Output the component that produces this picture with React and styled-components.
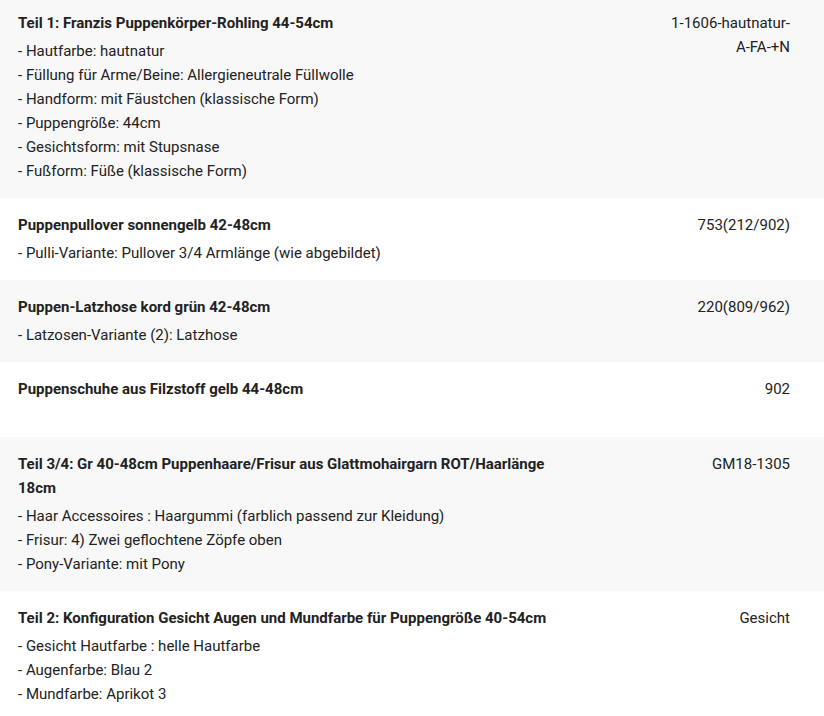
import styled, { createGlobalStyle } from "styled-components";

const Global = createGlobalStyle`
body{
margin:0;
background:#fff;
font-family:Roboto,"Noto Sans",sans-serif;
color:#222;
}
`;

const Table = styled.div`
display:flex;
flex-direction:column;
`;

const Row = styled.div`
display:grid;
grid-template-columns:1fr 125px;
column-gap:107px;
padding:15px 34px 15px 18px;
background:${p => (p.$odd ? "#f8f8f8" : "#fff")};
&:first-child{
padding-top:11px;
}
`;

const Info = styled.div`
display:flex;
flex-direction:column;
gap:4px;
min-height:${p => (p.$empty ? "45px" : "auto")};
`;

const Title = styled.div`
font-size:15px;
font-weight:700;
line-height:24px;
`;

const Options = styled.ul`
list-style:none;
margin:0;
padding:0;
font-size:15px;
line-height:24px;
`;

const Sku = styled.div`
font-size:15px;
line-height:24px;
text-align:right;
`;

const items = [
  {
    title: "Teil 1: Franzis Puppenkörper-Rohling 44-54cm",
    sku: "1-1606-hautnatur-A-FA-+N",
    opts: [
      "Hautfarbe: hautnatur",
      "Füllung für Arme/Beine: Allergieneutrale Füllwolle",
      "Handform: mit Fäustchen (klassische Form)",
      "Puppengröße: 44cm",
      "Gesichtsform: mit Stupsnase",
      "Fußform: Füße (klassische Form)",
    ],
  },
  {
    title: "Puppenpullover sonnengelb 42-48cm",
    sku: "753(212/902)",
    opts: ["Pulli-Variante: Pullover 3/4 Armlänge (wie abgebildet)"],
  },
  {
    title: "Puppen-Latzhose kord grün 42-48cm",
    sku: "220(809/962)",
    opts: ["Latzosen-Variante (2): Latzhose"],
  },
  {
    title: "Puppenschuhe aus Filzstoff gelb 44-48cm",
    sku: "902",
    opts: [],
  },
  {
    title: "Teil 3/4: Gr 40-48cm Puppenhaare/Frisur aus Glattmohairgarn ROT/Haarlänge 18cm",
    sku: "GM18-1305",
    opts: [
      "Haar Accessoires : Haargummi (farblich passend zur Kleidung)",
      "Frisur: 4) Zwei geflochtene Zöpfe oben",
      "Pony-Variante: mit Pony",
    ],
  },
  {
    title: "Teil 2: Konfiguration Gesicht Augen und Mundfarbe für Puppengröße 40-54cm",
    sku: "Gesicht",
    opts: [
      "Gesicht Hautfarbe : helle Hautfarbe",
      "Augenfarbe: Blau 2",
      "Mundfarbe: Aprikot 3",
    ],
  },
];

export default function App() {
  return (
    <>
      <Global />
      <Table>
        {items.map((it, i) => (
          <Row key={i} $odd={i % 2 === 0}>
            <Info $empty={it.opts.length === 0}>
              <Title>{it.title}</Title>
              {it.opts.length > 0 && (
                <Options>
                  {it.opts.map((o, j) => (
                    <li key={j}>- {o}</li>
                  ))}
                </Options>
              )}
            </Info>
            <Sku>{it.sku}</Sku>
          </Row>
        ))}
      </Table>
    </>
  );
}
